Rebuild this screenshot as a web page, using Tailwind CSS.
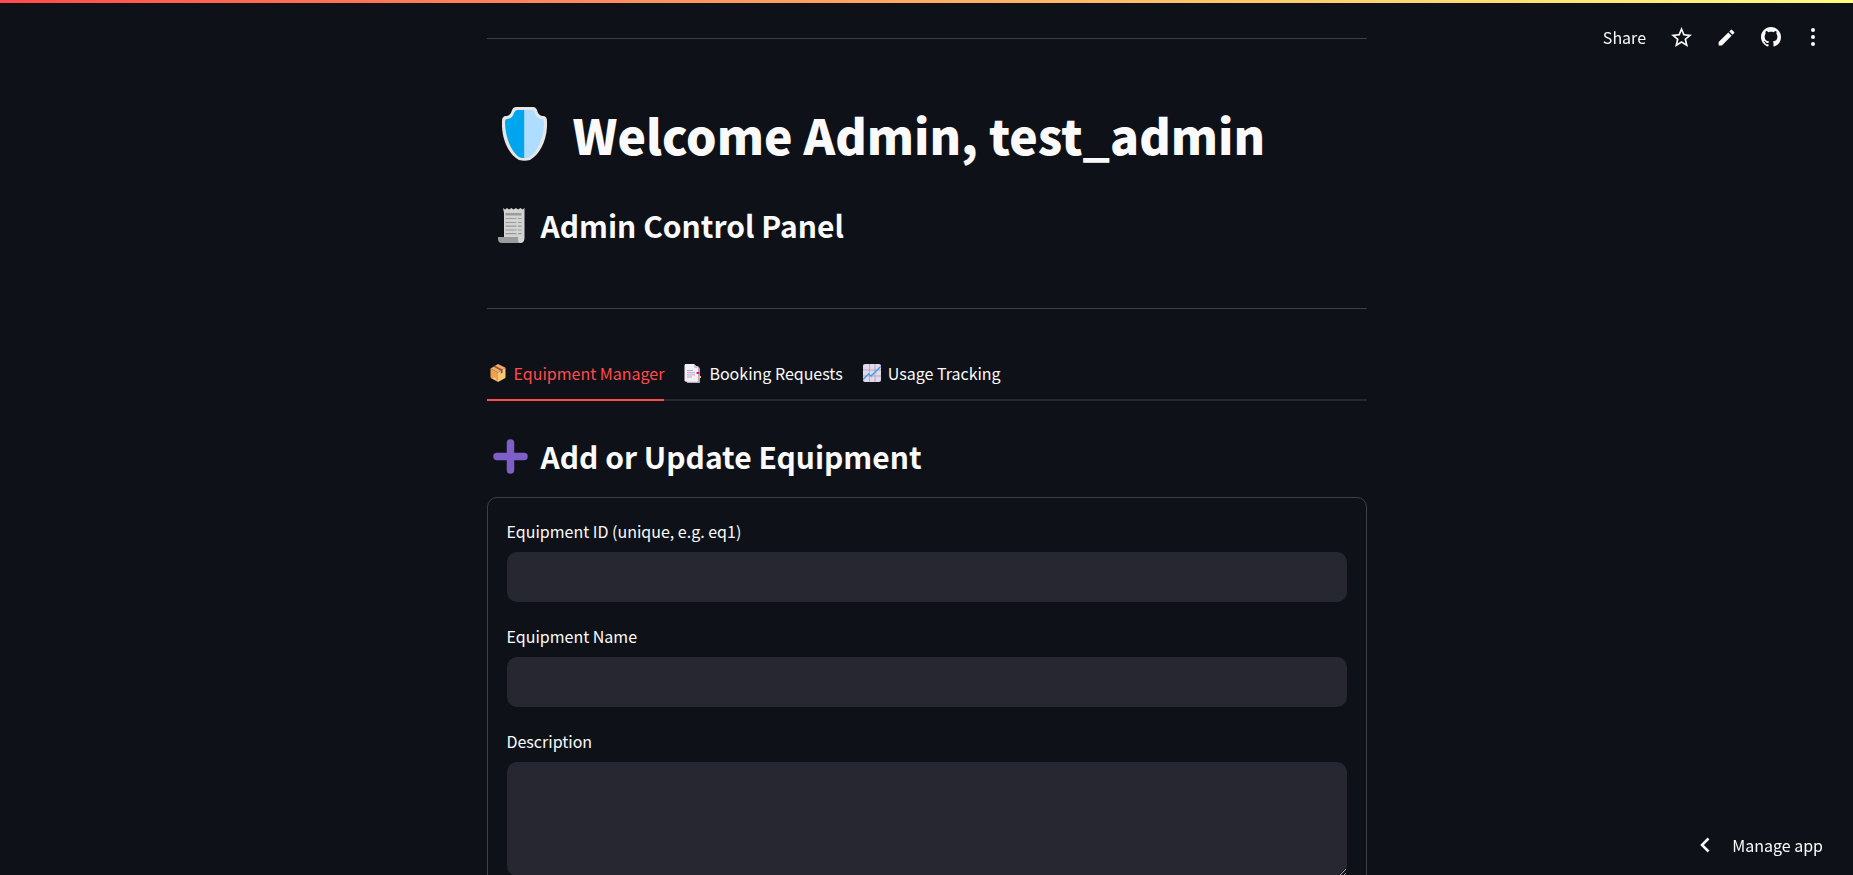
<!DOCTYPE html>
<html lang="en">
<head>
<meta charset="utf-8">
<meta name="viewport" content="width=device-width, initial-scale=1">
<title>Admin Control Panel</title>
<script src="https://cdn.jsdelivr.net/npm/@tailwindcss/browser@4"></script>
</head>
<body class="h-screen overflow-hidden bg-[#0e1117] font-['Noto_Sans_CJK_SC','Noto_Sans',sans-serif] text-base leading-6 text-[#fafafa] scheme-dark">
<div class="fixed inset-x-0 top-0 h-[3px] bg-linear-to-r from-[#ff4b4b] to-[#fffd80]"></div>

<header class="fixed top-[19px] right-8 flex h-9 items-center gap-6">
  <button type="button">Share</button>
  <button type="button" aria-label="Favorite">
    <svg class="size-[22px]" viewBox="1 1 21 21" fill="currentColor"><path d="M22 9.24l-7.19-.62L12 2 9.19 8.63 2 9.24l5.46 4.73L5.82 21 12 17.27 18.18 21l-1.63-7.03L22 9.24zM12 15.4l-3.76 2.27 1-4.28-3.32-2.88 4.38-.38L12 6.1l1.71 4.04 4.38.38-3.32 2.88 1 4.28L12 15.4z"/></svg>
  </button>
  <button type="button" aria-label="Edit">
    <svg class="size-[21px]" viewBox="0 0 24 24" fill="currentColor"><path d="M3 17.25V21h3.75L17.81 9.94l-3.75-3.75L3 17.25zM20.71 7.04a1 1 0 0 0 0-1.41l-2.34-2.34a1 1 0 0 0-1.41 0l-1.83 1.83 3.75 3.75 1.83-1.83z"/></svg>
  </button>
  <a href="#" aria-label="GitHub">
    <svg class="size-5" viewBox="0 0 16 16" fill="currentColor"><path d="M8 0C3.58 0 0 3.58 0 8c0 3.54 2.29 6.53 5.47 7.59.4.07.55-.17.55-.38 0-.19-.01-.82-.01-1.49-2.01.37-2.53-.49-2.69-.94-.09-.23-.48-.94-.82-1.13-.28-.15-.68-.52-.01-.53.63-.01 1.08.58 1.23.82.72 1.21 1.87.87 2.33.66.07-.52.28-.87.51-1.07-1.78-.2-3.64-.89-3.64-3.95 0-.87.31-1.59.82-2.15-.08-.2-.36-1.02.08-2.12 0 0 .67-.21 2.2.82.64-.18 1.32-.27 2-.27s1.36.09 2 .27c1.53-1.04 2.2-.82 2.2-.82.44 1.1.16 1.92.08 2.12.51.56.82 1.27.82 2.15 0 3.07-1.87 3.75-3.65 3.95.29.25.54.73.54 1.48 0 1.07-.01 1.93-.01 2.2 0 .21.15.46.55.38A8.01 8.01 0 0 0 16 8c0-4.42-3.58-8-8-8z"/></svg>
  </a>
  <button type="button" aria-label="Main menu">
    <svg class="h-5 w-4" viewBox="0 0 16 20" fill="currentColor"><circle cx="8" cy="3" r="2"/><circle cx="8" cy="10" r="2"/><circle cx="8" cy="17" r="2"/></svg>
  </button>
</header>

<main class="mx-auto max-w-[880px] pt-[38px]">
  <hr class="border-[#3d4044]">
  <h1 class="mt-[61px] flex h-[68px] items-center gap-[26px] pl-[15px] text-[48px] leading-[68px] font-black">
    <svg class="h-[54px] w-[45px]" viewBox="0 0 45 54" aria-hidden="true">
      <path d="M14 0h17c2 0 3 1 4 3 1 4 3 6 7 6 2 1 3 2 3 5 1 18-7 34-17 39-4 1-7 1-11 0C7 48-1 32 0 14c0-3 1-4 3-5 4 0 6-2 7-6 1-2 2-3 4-3z" fill="#e6e6e6"/>
      <path d="M22.500 3H15c-1 0-2 1-3 3-1 4-4 6-7 6-1 0-2 1-2 3 0 16 7 31 15 35.500 1 .5 3 .5 4.500.5z" fill="#00a6ed"/>
      <path d="M22.500 3H30c1 0 2 1 3 3 1 4 4 6 7 6 1 0 2 1 2 3 0 16-7 31-15 35.500-1 .5-3 .5-4.500.5z" fill="#aeddff"/>
    </svg>
    <span>Welcome Admin, test_admin</span>
  </h1>
  <h2 class="mt-[33px] flex h-12 items-center gap-4 pl-[11px] text-[30px] leading-[48px] font-bold">
    <svg class="h-[35px] w-[27px]" viewBox="0 0 27 35" aria-hidden="true">
      <path d="M5 0l2 1.500L9 0l2 1.500L13.500 0l2 1.500L18 0l2 1.500L22.500 0l2 1.500L26.500 0v30c0 3-1.500 5-4 5H6V5z" fill="#d3d3d3"/>
      <path d="M0 29h20v3c0 2 1 3 2 3H4c-3 0-4-2-4-4z" fill="#9b9b9b"/>
      <path d="M7.500 5h16v2.500h-16z" fill="#9b9b9b"/>
      <path d="M7.500 10.500h11M20 10.500h3.500M7.500 14.500h11M20 14.500h3.500M7.500 18.200h11M20 18.200h3.500M7.500 22h11M20 22h3.500M7.500 25.700h11M20 25.700h3.500" stroke="#9b9b9b" stroke-width="1.200"/>
    </svg>
    <span>Admin Control Panel</span>
  </h2>
  <hr class="mt-[59px] border-[#3d4044]">

  <div role="tablist" class="mt-[42px] flex h-[50px] gap-5 border-b-2 border-[#262730]">
    <button type="button" role="tab" aria-selected="true" class="-mb-0.5 flex items-center gap-2 border-b-2 border-[#ff4b4b] pb-1 pl-[3px] text-[#ff4b4b]">
      <svg class="h-[18px] w-4" viewBox="0 0 16 18" aria-hidden="true">
        <path d="M8 0l7.500 3.800L8 8.500.5 4.500z" fill="#f3ad61"/><path d="M.5 4.500L8 8.500V18L1.500 14.500C.8 14 .5 13.600.5 13z" fill="#f0a04b"/><path d="M15.500 3.800V13c0 .7-.3 1.200-1 1.500L8 18V8.500z" fill="#fbc878"/><path d="M3.200 2.600l7.600 4.200v3l1.800-1V5.600L5 1.700z" fill="#8c5543"/><path d="M3.500 13.300l2.300 1.300v1.300l-2.300-1.300z" fill="#ffe0ad"/>
      </svg>
      <span>Equipment Manager</span>
    </button>
    <button type="button" role="tab" aria-selected="false" class="flex items-center gap-[7px] pb-1">
      <svg class="h-[19px] w-[18px]" viewBox="0 0 18 19" aria-hidden="true">
        <path d="M5 2h9l2 2.500V18c0 .5-.3 1-1 1H3z" fill="#b4acbc"/><path d="M2 0h8l4 4v12.500c0 .8-.4 1.200-1 1.200H2c-.8 0-1.500-.5-1.500-1.200V1.500C.5.700 1 0 2 0z" fill="#f3eef8"/><path d="M10 0l4 4h-3c-.6 0-1-.4-1-1z" fill="#cdc4d6"/><path d="M3 6.500h6M3 8.700h8M3 10.900h8M3 13h5" stroke="#b4acbc"/><path d="M12.500 8h3v2h-3z" fill="#f70a8d"/><path d="M14.500 12h2.500v2h-2.500z" fill="#f9c23c"/>
      </svg>
      <span>Booking Requests</span>
    </button>
    <button type="button" role="tab" aria-selected="false" class="flex items-center gap-[7px] pb-1">
      <svg class="size-[18px]" viewBox="0 0 18 18" aria-hidden="true">
        <rect width="18" height="18" rx="2" fill="#e1d8ec"/><path d="M6.500 0v18M12 0v18M0 6h18M0 12h18" stroke="#b4acbc"/><path d="M0 15.500L5.500 10 8 12l9.800-9.500" fill="none" stroke="#3f9fe8" stroke-width="1.500"/>
      </svg>
      <span>Usage Tracking</span>
    </button>
  </div>

  <h2 class="mt-[31px] flex h-12 items-center gap-[13px] pl-1.5 text-[30px] leading-[48px] font-bold">
    <svg class="size-[35px]" viewBox="0 0 35 35" aria-hidden="true"><path d="M17.500 4v27M4 17.500h27" stroke="#7e5fc8" stroke-width="7.500" stroke-linecap="round"/></svg>
    <span>Add or Update Equipment</span>
  </h2>

  <form class="mt-[17px] flex flex-col gap-[22px] rounded-[10px] border border-[#3d4044] px-[19px] py-[21px]">
    <div class="flex flex-col gap-[9px]">
      <label for="equipment-id">Equipment ID (unique, e.g. eq1)</label>
      <input id="equipment-id" type="text" class="h-[50px] w-full rounded-[10px] bg-[#262730] px-4 outline-none">
    </div>
    <div class="flex flex-col gap-[9px]">
      <label for="equipment-name">Equipment Name</label>
      <input id="equipment-name" type="text" class="h-[50px] w-full rounded-[10px] bg-[#262730] px-4 outline-none">
    </div>
    <div class="flex flex-col gap-[9px]">
      <label for="description">Description</label>
      <textarea id="description" class="h-[114px] w-full resize-y rounded-[10px] bg-[#262730] p-4 outline-none"></textarea>
    </div>
  </form>
</main>

<button type="button" class="fixed right-[30px] bottom-[18px] flex items-center gap-[22px]">
  <svg class="h-4 w-3" viewBox="0 0 12 16" fill="none" stroke="currentColor" stroke-width="2.500" aria-hidden="true"><path d="M10.500 1.500L4 8l6.500 6.500"/></svg>
  <span>Manage app</span>
</button>
</body>
</html>
